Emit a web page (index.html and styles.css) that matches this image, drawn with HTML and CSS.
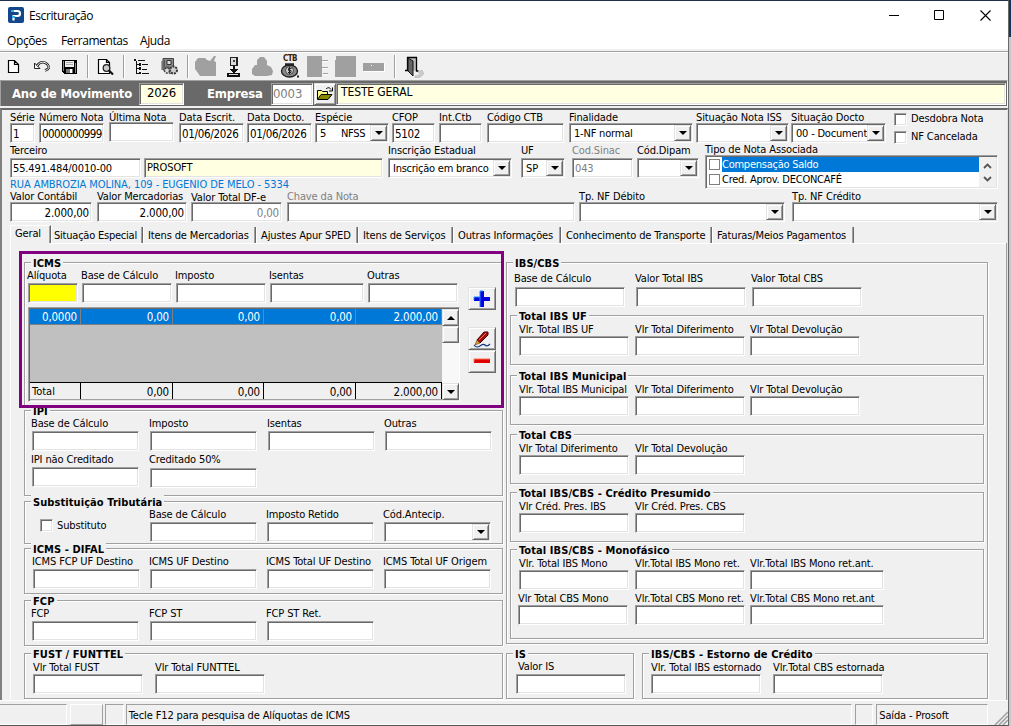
FILE: index.html
```html
<!DOCTYPE html>
<html lang="pt-BR">
<head>
    <meta charset="UTF-8">
    <meta name="viewport" content="width=device-width, initial-scale=1.0">
    <title>Escrituração</title>
    <link rel="stylesheet" href="styles.css">
</head>
<body>

<div class="desktop">
<div class="window">
    <!-- Title bar -->
    <div class="title-bar">
        <svg class="app-icon" width="16" height="16" viewBox="0 0 16 16"><rect width="16" height="16" rx="2" fill="#14468c"/><path d="M5.500 13.500V8M5 4h4.500a2.400 2.400 0 0 1 0 5H6" fill="none" stroke="#fff" stroke-width="2.200"/><path d="M3 3h3v2H3zM4 9h3v2H4z" fill="#2cb5e8"/></svg>
        <span class="title-text">Escrituração</span>
        <div class="window-buttons">
            <svg width="46" height="28" viewBox="0 0 46 28"><path d="M18 14.500h10" stroke="#000"/></svg>
            <svg width="46" height="28" viewBox="0 0 46 28"><path d="M17.500 9.500h9v9h-9z" fill="none" stroke="#000"/></svg>
            <svg width="46" height="28" viewBox="0 0 46 28"><path d="M17.500 9.500l10 10m0-10l-10 10" stroke="#000" stroke-width="1.100"/></svg>
        </div>
    </div>
    <div class="menu-bar">
        <span class="m-opcoes">Opções</span><span class="m-ferramentas">Ferramentas</span><span>Ajuda</span>
    </div>

    <!-- Toolbar -->
    <div class="toolbar">
        <div class="tool"><svg width="22" height="22" viewBox="0 0 22 22"><path d="M5.500 4.500h6l4 4v8h-10zM11.500 4.500v4h4" fill="#fff" stroke="#000" stroke-width="1.200"/></svg></div>
        <div class="tool"><svg width="22" height="22" viewBox="0 0 22 22"><path d="M3.500 7v5.500H9z" fill="#fff" stroke="#222"/><path d="M6 10C9 5 14 5.500 16.500 8.500S18 13 14 14.500" fill="none" stroke="#222" stroke-width="2.600"/><path d="M6 10C9 5 14 5.500 16.500 8.500S18 13 14 14.500" fill="none" stroke="#fff" stroke-width="1"/></svg></div>
        <div class="tool"><svg width="22" height="22" viewBox="0 0 22 22" shape-rendering="crispEdges"><path d="M3 4h15v14H5l-2-2z" fill="#000"/><path d="M6 5h9v6H6z" fill="#f0f0f0"/><path d="M4 5h1v10H4zM16 7h1v10h-1z" fill="#888"/><path d="M7 6h7v1H7zM7 8h7v1H7z" fill="#aaa"/><path d="M7 13h7v4H7z" fill="#777"/><path d="M11 13h2v4h-2z" fill="#fff"/></svg></div>
        <div class="tool-sep"></div>
        <div class="tool"><svg width="22" height="22" viewBox="0 0 22 22"><path d="M3.500 3.500h8l3 3v11h-11zM11.500 3.500v3h3" fill="#fff" stroke="#000" stroke-width="1.200"/><circle cx="11.500" cy="12" r="3.300" fill="#ccc" stroke="#222" stroke-width="1.300"/><path d="M14 14.500l4 4" stroke="#111" stroke-width="2.200"/></svg></div>
        <div class="tool-sep"></div>
        <div class="tool"><svg width="22" height="22" viewBox="0 0 22 22" shape-rendering="crispEdges"><path d="M3 3h2v2H3zM7 4h7v1H7zM5 5h1v13H5zM6 8h2v1H6zM8 7h2v3H8zM11 8h6v1h-6zM6 12h2v1H6zM8 11h2v3H8zM11 13h5v1h-5zM6 17h2v1H6zM8 16h2v2H8zM11 17h7v1h-7z" fill="#111"/></svg></div>
        <div class="tool"><svg width="22" height="22" viewBox="0 0 22 22"><path d="M4 2.500h10.500V14H4z" fill="#888" stroke="#444"/><path d="M8 4.500h4v4H8z" fill="#ddd" stroke="#333"/><path d="M3 5v9M5.500 4v8" stroke="#555"/><path d="M4 12l5-1 2 7" fill="none" stroke="#666" stroke-width="2"/><circle cx="14.500" cy="14" r="3.500" fill="#ccc" stroke="#333" stroke-width="2" stroke-dasharray="2 1"/><circle cx="8" cy="14.500" r="2.500" fill="#ddd" stroke="#444" stroke-width="1.500" stroke-dasharray="2 1"/></svg></div>
        <div class="tool-sep"></div>
        <div class="tool"><svg width="22" height="22" viewBox="0 0 22 22"><path d="M0 6l3-4h7l2 2 3 1 4-5h2l-2 5 2 1v14H5L3 17 0 13z" fill="#a0a0a0"/></svg></div>
        <div class="tool"><svg width="22" height="22" viewBox="0 0 22 22" shape-rendering="crispEdges"><path d="M7 1h8v9H7z" fill="#222"/><path d="M8 2h5v7H8z" fill="#ddd"/><path d="M10 4h2v2h-2z" fill="#444"/><path d="M10 10h2v3h4l-5 4-5-4h4zM4 17h13v4H4z" fill="#111"/><path d="M6 18h9v1H6z" fill="#ddd"/></svg></div>
        <div class="tool"><svg width="22" height="22" viewBox="0 0 22 22"><path d="M9 1h4l3 4v4l4 2 2 4-1 4-5 1H4l-3-2v-5l3-4h2V4z" fill="#a0a0a0"/></svg></div>
        <div class="tool"><svg width="22" height="22" viewBox="0 0 22 22"><ellipse cx="10.500" cy="15" rx="8" ry="6" fill="#888" stroke="#222" stroke-width="1.400"/><path d="M6 8.500h9" stroke="#222" stroke-width="2.500"/><circle cx="10.500" cy="14.500" r="4" fill="#ccc" stroke="#444"/><path d="M12.500 12.500h-3v2h2.500v2h-3M10.500 11v7" fill="none" stroke="#222"/><path d="M18 20.500h2" stroke="#222" stroke-width="2"/></svg><span class="ctb-text">CTB</span></div>
        <div class="tool"><svg width="22" height="22" viewBox="0 0 22 22" shape-rendering="crispEdges"><path d="M0 0h15v21H0zM15 4h6v1h-6zM15 11h6v1h-6zM16 17h5v1h-5z" fill="#a0a0a0"/><path d="M15 5h6v1h-6zM15 12h6v1h-6zM16 18h5v1h-5z" fill="#fff"/></svg></div>
        <div class="tool"><svg width="22" height="22" viewBox="0 0 22 22" shape-rendering="crispEdges"><path d="M1 0h20v21H0V4h1z" fill="#a0a0a0"/></svg></div>
        <div class="tool"><svg width="22" height="22" viewBox="0 0 22 22" shape-rendering="crispEdges"><path d="M0 7h21v8H0z" fill="#a0a0a0"/><path d="M8 9h1v1H8zM21 7h1v9H1v-1h20z" fill="#fff"/></svg></div>
        <div class="tool-sep last"></div>
        <div class="tool"><svg width="22" height="22" viewBox="0 0 22 22"><path d="M4.500 14V1.500h9V15h2M2 14.500h3" fill="#bbb" stroke="#000" stroke-width="1.300"/><path d="M5 2l5 3v15l-5-5z" fill="#666" stroke="#111"/><path d="M12 20c3 0 4-1 5-3l-2-1 4-2 2 4-1 0c-1 3-4 4-8 4z" fill="#ccc" stroke="#aaa" stroke-width=".5"/></svg></div>
    </div>

    <!-- Company strip -->
    <div class="company-bar">
        <span class="company-label lbl-ano">Ano de Movimento</span>
        <div class="sunken year-box">2026</div>
        <span class="company-label lbl-emp">Empresa</span>
        <div class="sunken code-box">0003</div>
        <div class="raised open-button"><svg width="18" height="16" viewBox="0 0 18 16"><path d="M1.500 13V4.500h4l1 1h5V8" fill="#ff8" stroke="#000"/><path d="M1.500 13.500L5 8.500h11l-4 5z" fill="#880" stroke="#000"/><path d="M10 3c2-2 4-1.500 5 .5M16.500 1.500V5H13" fill="none" stroke="#000"/></svg></div>
        <div class="sunken company-name">TESTE GERAL</div>
    </div>

    <div class="main-panel">
        <div class="row row-doc">
            <div class="field near f-serie"><label>Série</label><div class="sunken">1</div></div>
            <div class="field near f-numero"><label>Número Nota</label><div class="sunken">0000000999</div></div>
            <div class="field f-ultima"><label>Última Nota</label><div class="sunken"></div></div>
            <div class="field near f-escrit"><label>Data Escrit.</label><div class="sunken">01/06/2026</div></div>
            <div class="field near f-docto"><label>Data Docto.</label><div class="sunken">01/06/2026</div></div>
            <div class="field near f-especie"><label>Espécie</label><div class="sunken combo"><span class="especie-code">5</span><span>NFSS</span><i class="raised arrow"></i></div></div>
            <div class="field near f-cfop"><label>CFOP</label><div class="sunken">5102</div></div>
            <div class="field near f-int"><label>Int.Ctb</label><div class="sunken"></div></div>
            <div class="field near f-ctb"><label>Código CTB</label><div class="sunken"></div></div>
            <div class="field near f-final"><label>Finalidade</label><div class="sunken combo"><span>1-NF normal</span><i class="raised arrow"></i></div></div>
            <div class="field near f-iss"><label>Situação Nota ISS</label><div class="sunken combo"><i class="raised arrow"></i></div></div>
            <div class="field near f-sit"><label>Situação Docto</label><div class="sunken combo"><span>00 - Document</span><i class="raised arrow"></i></div></div>
            <div class="check-stack">
                <div class="check"><i class="sunken box"></i>Desdobra Nota</div>
                <div class="check"><i class="sunken box"></i>NF Cancelada</div>
            </div>
        </div>

        <div class="row row-party">
            <div class="field far f-terceiro"><label>Terceiro</label><div class="sunken">55.491.484/0010-00</div></div>
            <div class="field far f-nome"><label></label><div class="sunken cream">PROSOFT</div></div>
            <div class="field far f-inscr"><label>Inscrição Estadual</label><div class="sunken combo"><span>Inscrição em branco</span><i class="raised arrow"></i></div></div>
            <div class="field far f-uf"><label>UF</label><div class="sunken combo"><span>SP</span><i class="raised arrow"></i></div></div>
            <div class="field far f-sinac disabled"><label>Cod.Sinac</label><div class="sunken">043</div></div>
            <div class="field far f-dipam"><label>Cód.Dipam</label><div class="sunken combo"><i class="raised arrow"></i></div></div>
            <div class="field f-assoc"><label>Tipo de Nota Associada</label>
                <div class="sunken list">
                    <div class="list-items">
                        <div class="list-item"><i></i><span class="selected">Compensação Saldo</span></div>
                        <div class="list-item"><i></i><span>Cred. Aprov. DECONCAFÉ</span></div>
                    </div>
                    <svg class="list-scroll" width="17" height="30" viewBox="0 0 17 30"><path d="M5 11l3.500-3.500L12 11M5 20l3.500 3.500L12 20" fill="none" stroke="#555" stroke-width="1.800"/></svg>
                </div>
            </div>
        </div>
        <div class="address">RUA AMBROZIA MOLINA, 109 - EUGENIO DE MELO - 5334</div>

        <div class="row row-values">
            <div class="field near f-contabil"><label>Valor Contábil</label><div class="sunken num">2.000,00</div></div>
            <div class="field near f-merc"><label>Valor Mercadorias</label><div class="sunken num">2.000,00</div></div>
            <div class="field near f-dfe"><label>Valor Total DF-e</label><div class="sunken num">0,00</div></div>
            <div class="field near f-chave disabled"><label>Chave da Nota</label><div class="sunken"></div></div>
            <div class="field near f-debito"><label>Tp. NF Débito</label><div class="sunken combo"><i class="raised arrow"></i></div></div>
            <div class="field near f-credito"><label>Tp. NF Crédito</label><div class="sunken combo"><i class="raised arrow"></i></div></div>
        </div>

        <!-- Tabs -->
        <div class="tabs">
            <div class="tab active">Geral</div>
            <div class="tab t-sit">Situação Especial</div>
            <div class="tab t-merc">Itens de Mercadorias</div>
            <div class="tab t-sped">Ajustes Apur SPED</div>
            <div class="tab t-serv">Itens de Serviços</div>
            <div class="tab t-outras">Outras Informações</div>
            <div class="tab t-transp">Conhecimento de Transporte</div>
            <div class="tab t-fat">Faturas/Meios Pagamentos</div>
        </div>

        <div class="tab-page">
            <div class="left-column">
                <div class="group g-icms">
                    <h3>ICMS</h3>
                    <div class="icms-body">
                        <div>
                            <div class="row icms-fields">
                                <div class="field"><label>Alíquota</label><div class="sunken yellow"></div></div>
                                <div class="field"><label>Base de Cálculo</label><div class="sunken"></div></div>
                                <div class="field"><label>Imposto</label><div class="sunken"></div></div>
                                <div class="field"><label>Isentas</label><div class="sunken"></div></div>
                                <div class="field"><label>Outras</label><div class="sunken"></div></div>
                            </div>
                            <div class="sunken data-grid">
                                <div class="grid-area">
                                    <div class="grid-row grid-selected"><span>0,0000</span><span>0,00</span><span>0,00</span><span>0,00</span><span>2.000,00</span></div>
                                    <div class="grid-row grid-total"><span>Total</span><span>0,00</span><span>0,00</span><span>0,00</span><span>2.000,00</span></div>
                                </div>
                                <div class="scrollbar">
                                    <i class="raised arrow up"></i>
                                    <i class="raised thumb"></i>
                                    <i class="raised arrow down"></i>
                                </div>
                            </div>
                        </div>
                        <div class="grid-buttons">
                            <div class="raised b-add"><svg width="18" height="18" viewBox="0 0 18 18"><path d="M7 1h4v6h6v4h-6v6H7v-6H1V7h6z" fill="#0000e0"/><path d="M7 17V1h3M1 10V7h6" fill="none" stroke="#2090ff"/></svg></div>
                            <div class="raised b-edit"><svg width="18" height="18" viewBox="0 0 18 18"><path d="M4 10l7-8 4 0 0 3-8 8z" fill="#a01010" stroke="#400"/><path d="M6 10l7-7" stroke="#f64"/><path d="M4 10l3 3-5 2z" fill="#e0a030" stroke="#630" stroke-width=".6"/><path d="M1 15c2 3 4 2 6 1s3-3 5-1 4 0 5-1" fill="none" stroke="#103080" stroke-width="1.200"/></svg></div>
                            <div class="raised b-del"><svg width="18" height="18" viewBox="0 0 18 18"><path d="M1 6h16v4H1z" fill="#e00000"/><path d="M1 9V6h16" fill="none" stroke="#ff7050"/></svg></div>
                        </div>
                    </div>
                </div>

                <div class="group g-ipi">
                    <h3>IPI</h3>
                    <div class="row cols-107">
                        <div class="field"><label>Base de Cálculo</label><div class="sunken"></div></div>
                        <div class="field"><label>Imposto</label><div class="sunken"></div></div>
                        <div class="field"><label>Isentas</label><div class="sunken"></div></div>
                        <div class="field"><label>Outras</label><div class="sunken"></div></div>
                    </div>
                    <div class="row cols-107 second">
                        <div class="field"><label>IPI não Creditado</label><div class="sunken"></div></div>
                        <div class="field far"><label>Creditado 50%</label><div class="sunken"></div></div>
                    </div>
                </div>

                <div class="group g-subst">
                    <h3>Substituição Tributária</h3>
                    <div class="row cols-107">
                        <div class="check subst-check"><i class="sunken box"></i>Substituto</div>
                        <div class="field"><label>Base de Cálculo</label><div class="sunken"></div></div>
                        <div class="field"><label>Imposto Retido</label><div class="sunken"></div></div>
                        <div class="field"><label>Cód.Antecip.</label><div class="sunken combo"><i class="raised arrow"></i></div></div>
                    </div>
                </div>

                <div class="group g-difal">
                    <h3>ICMS - DIFAL</h3>
                    <div class="row cols-107">
                        <div class="field"><label>ICMS FCP UF Destino</label><div class="sunken"></div></div>
                        <div class="field"><label>ICMS UF Destino</label><div class="sunken"></div></div>
                        <div class="field"><label>ICMS Total UF Destino</label><div class="sunken"></div></div>
                        <div class="field"><label>ICMS Total UF Origem</label><div class="sunken"></div></div>
                    </div>
                </div>

                <div class="group g-fcp">
                    <h3>FCP</h3>
                    <div class="row cols-107">
                        <div class="field"><label>FCP</label><div class="sunken"></div></div>
                        <div class="field"><label>FCP ST</label><div class="sunken"></div></div>
                        <div class="field"><label>FCP ST Ret.</label><div class="sunken"></div></div>
                    </div>
                </div>

                <div class="group g-fust">
                    <h3>FUST / FUNTTEL</h3>
                    <div class="row cols-fust">
                        <div class="field near"><label>Vlr Total FUST</label><div class="sunken"></div></div>
                        <div class="field near"><label>Vlr Total FUNTTEL</label><div class="sunken"></div></div>
                    </div>
                </div>
                <div class="highlight"></div>
            </div>

            <div class="right-column">
                <div class="group g-ibs">
                    <h3>IBS/CBS</h3>
                    <div class="row cols-ibs">
                        <div class="field far"><label>Base de Cálculo</label><div class="sunken"></div></div>
                        <div class="field far"><label>Valor Total IBS</label><div class="sunken"></div></div>
                        <div class="field far"><label>Valor Total CBS</label><div class="sunken"></div></div>
                    </div>

                    <div class="group inner">
                        <h3>Total IBS UF</h3>
                        <div class="row cols-110">
                            <div class="field near"><label>Vlr. Total IBS UF</label><div class="sunken"></div></div>
                            <div class="field near"><label>Vlr Total Diferimento</label><div class="sunken"></div></div>
                            <div class="field near"><label>Vlr Total Devolução</label><div class="sunken"></div></div>
                        </div>
                    </div>
                    <div class="group inner i-mun">
                        <h3>Total IBS Municipal</h3>
                        <div class="row cols-110">
                            <div class="field near"><label>Vlr. Total IBS Municipal</label><div class="sunken"></div></div>
                            <div class="field near"><label>Vlr Total Diferimento</label><div class="sunken"></div></div>
                            <div class="field near"><label>Vlr Total Devolução</label><div class="sunken"></div></div>
                        </div>
                    </div>
                    <div class="group inner i-cbs">
                        <h3>Total CBS</h3>
                        <div class="row cols-110">
                            <div class="field near"><label>Vlr Total Diferimento</label><div class="sunken"></div></div>
                            <div class="field near"><label>Vlr Total Devolução</label><div class="sunken"></div></div>
                        </div>
                    </div>
                    <div class="group inner i-cred">
                        <h3>Total IBS/CBS - Crédito Presumido</h3>
                        <div class="row cols-110">
                            <div class="field near"><label>Vlr Créd. Pres. IBS</label><div class="sunken"></div></div>
                            <div class="field near"><label>Vlr Créd. Pres. CBS</label><div class="sunken"></div></div>
                        </div>
                    </div>
                    <div class="group inner i-mono">
                        <h3>Total IBS/CBS - Monofásico</h3>
                        <div class="row cols-110">
                            <div class="field near"><label>Vlr. Total IBS Mono</label><div class="sunken"></div></div>
                            <div class="field near"><label>Vlr.Total IBS Mono ret.</label><div class="sunken"></div></div>
                            <div class="field near"><label>Vlr.Total IBS Mono ret.ant.</label><div class="sunken"></div></div>
                        </div>
                        <div class="row cols-110 second">
                            <div class="field near"><label>Vlr Total CBS Mono</label><div class="sunken"></div></div>
                            <div class="field near"><label>Vlr.Total CBS Mono ret.</label><div class="sunken"></div></div>
                            <div class="field near"><label>Vlr.Total CBS Mono ret.ant</label><div class="sunken"></div></div>
                        </div>
                    </div>
                </div>

                <div class="bottom-groups">
                    <div class="group g-is">
                        <h3>IS</h3>
                        <div class="field"><label>Valor IS</label><div class="sunken"></div></div>
                    </div>
                    <div class="group g-estorno">
                        <h3>IBS/CBS - Estorno de Crédito</h3>
                        <div class="row cols-fust">
                            <div class="field near"><label>Vlr. Total IBS estornado</label><div class="sunken"></div></div>
                            <div class="field near"><label>Vlr.Total CBS estornada</label><div class="sunken"></div></div>
                        </div>
                    </div>
                </div>
            </div>
        </div>
    </div>

    <!-- Status bar -->
    <div class="status-bar">
        <div class="status s-one"></div>
        <div class="status s-two"></div>
        <div class="status s-three"></div>
        <div class="status s-hint">Tecle F12 para pesquisa de Alíquotas de ICMS</div>
        <div class="status s-five"></div>
        <div class="status s-user">Saída - Prosoft</div>
        <svg class="grip" width="14" height="14" viewBox="0 0 14 14"><path d="M1 14L14 1M5 14l9-9M9 14l5-5" stroke="#a0a0a0" stroke-width="1.500"/></svg>
    </div>
</div>
<div class="behind"><div class="behind-top"></div></div>
</div>

</body>
</html>
```

FILE: styles.css
```css
* {
    box-sizing: border-box;
}

body {
    margin: 0;
    background: #c8c8c8;
    font-family: "DejaVu Sans Condensed", "DejaVu Sans", sans-serif;
    font-stretch: condensed;
    font-size: 11px;
    line-height: 14px;
    letter-spacing: -0.13px;
    color: #000;
    overflow: hidden;
}

.desktop {
    display: flex;
    width: 1011px;
    height: 726px;
}

.window {
    width: 1009px;
    height: 726px;
    background: #f0f0f0;
    border-top: 1px solid #1f3048;
    border-right: 1px solid #696969;
    border-bottom: 1px solid #555;
    display: flex;
    flex-direction: column;
}

.behind {
    width: 2px;
    background: #c8c8c8;
}

.behind-top {
    height: 37px;
    background: #17365a;
}

/* 3D edges */
.sunken {
    background: #fff;
    border: 1px solid;
    border-color: #a0a0a0 #fff #fff #a0a0a0;
    box-shadow: inset 1px 1px 0 #696969, inset -1px -1px 0 #e3e3e3;
}

.raised {
    background: #f0f0f0;
    border: 1px solid;
    border-color: #e3e3e3 #696969 #696969 #e3e3e3;
    box-shadow: inset 1px 1px 0 #fff, inset -1px -1px 0 #a0a0a0;
}

/* Title and menu */
.title-bar,
.menu-bar {
    display: flex;
    align-items: center;
    background: #fff;
    font-family: "Open Sans", "Noto Sans", sans-serif;
    font-stretch: normal;
    font-size: 12px;
    letter-spacing: -0.4px;
}

.title-bar {
    height: 28px;
    padding-left: 8px;
}

.title-text {
    margin-left: 5px;
    padding-top: 2px;
}

.window-buttons {
    display: flex;
    margin: 0 -1px 0 auto;
}

.menu-bar {
    height: 20px;
    padding: 4px 0 0 7px;
}

.m-opcoes {
    width: 54px;
}

.m-ferramentas {
    width: 79px;
}

/* Toolbar */
.toolbar {
    display: flex;
    align-items: center;
    height: 31px;
    padding-top: 2px;
    background: linear-gradient(#f0f0f0 2px, #a0a0a0 2px, #a0a0a0 3px, #fff 3px, #fff 4px, #f0f0f0 4px);
    border-bottom: 1px solid #f0f0f0;
}

.tool {
    position: relative;
    display: flex;
    justify-content: center;
    align-items: center;
    width: 28px;
    height: 24px;
    padding-top: 4px;
}

.ctb-text {
    position: absolute;
    top: 2px;
    left: 5px;
    width: 18px;
    font-size: 8px;
    line-height: 8px;
    font-weight: bold;
    text-align: center;
    color: #402000;
    letter-spacing: -0.5px;
}

.tool-sep {
    width: 8px;
    height: 23px;
    margin-top: 2px;
    background: linear-gradient(90deg, transparent 3px, #a0a0a0 3px, #a0a0a0 4px, #fff 4px, #fff 5px, transparent 5px);
}

.tool-sep.last {
    width: 12px;
    background-position: 3px 0;
    background-repeat: no-repeat;
}

/* Company strip */
.company-bar {
    display: flex;
    height: 26px;
    padding: 2px 1px 0 1px;
    background: #696969;
    border-top: 1px solid #a0a0a0;
    border-left: 1px solid #a0a0a0;
    border-right: 1px solid #fff;
}

.company-label {
    flex: none;
    color: #fff;
    font-size: 13px;
    font-weight: bold;
    line-height: 22px;
    letter-spacing: -0.2px;
    white-space: nowrap;
}

.lbl-ano {
    width: 137px;
    padding-left: 10px;
}

.lbl-emp {
    width: 87px;
    padding-left: 23px;
}

.company-bar .sunken,
.company-bar .raised {
    height: 22px;
}

.year-box {
    width: 45px;
    background: #ffffe1;
    font-size: 13px;
    line-height: 17px;
    text-align: center;
}

.code-box {
    width: 42px;
    padding-left: 1px;
    color: #808080;
    font-size: 13px;
    line-height: 19px;
}

.open-button {
    display: flex;
    align-items: center;
    justify-content: center;
    width: 22px;
    margin-left: 1px;
}

.company-name {
    flex: 1;
    padding-left: 4px;
    background: #ffffe1;
    font-size: 12px;
    line-height: 17px;
}

/* Main panel */
.main-panel {
    height: 592px;
    margin-top: 2px;
    padding: 0 0 0 8px;
    border-top: 2px solid #696969;
    border-left: 2px solid #808080;
    border-right: 1px solid #e3e3e3;
}

.row {
    display: flex;
}

.field {
    flex: none;
}

.field label {
    display: block;
    height: 14px;
    margin-bottom: 1px;
    line-height: 16px;
    white-space: nowrap;
}

.field.near > label {
    margin-bottom: 0;
}

.field.far > label {
    margin-bottom: 2px;
}

.field > .sunken {
    height: 20px;
    padding: 0 2px;
    line-height: 20px;
    white-space: nowrap;
}

.disabled {
    color: #808080;
}

.field > .num {
    text-align: right;
    font-size: 11.5px;
    letter-spacing: -0.2px;
}

.field > .combo {
    display: flex;
    padding: 1px 1px 1px 4px;
    line-height: 18px;
}

.combo .arrow {
    flex: none;
    margin-left: auto;
}

.arrow {
    display: flex;
    align-items: center;
    justify-content: center;
    width: 17px;
}

.arrow::after {
    content: "";
    border: 4px solid transparent;
    border-top-color: #000;
    border-bottom-width: 0;
}

.arrow.up::after {
    border-top: 0;
    border-bottom: 4px solid #000;
}

.field > .cream {
    background: #ffffe1;
    line-height: 18px;
}

.field > .yellow {
    background: #ff0;
}

.check {
    display: flex;
    align-items: center;
    line-height: 16px;
}

.box {
    width: 13px;
    height: 13px;
    margin-right: 4px;
}

/* Document row */
.row-doc {
    height: 33px;
    margin-top: -1px;
}

.row-doc label {
    line-height: 17px;
}

.row-party label {
    line-height: 18px;
}

.row-doc .field > .sunken {
    font-size: 11.5px;
    letter-spacing: -0.3px;
}

.f-serie { width: 25px; margin-right: 4px; }
.f-numero { width: 65px; margin-right: 5px; }
.row-doc .f-numero > .sunken { letter-spacing: -0.6px; }
.f-ultima { width: 65px; margin-right: 5px; }
.f-ultima > label { margin-bottom: -1px !important; }
.f-escrit { width: 65px; margin-right: 3px; }
.f-docto { width: 65px; margin-right: 3px; }
.f-especie { width: 74px; margin-right: 3px; }
.row-doc .f-especie > .sunken { font-size: 11px; }
.especie-code { width: 21px; }
.f-cfop { width: 43px; margin-right: 4px; }
.f-int { width: 43px; margin-right: 5px; }
.f-ctb { width: 77px; margin-right: 5px; }
.f-final { width: 124px; margin-right: 3px; }
.f-iss { width: 93px; margin-right: 2px; }
.f-sit { width: 95px; margin-right: 8px; }
.row-doc .f-final > .sunken { font-size: 11px; letter-spacing: -0.2px; }
.row-doc .f-sit > .sunken { font-size: 11px; letter-spacing: -0.2px; }

.check-stack {
    padding-top: 3px;
}

.check-stack .check {
    height: 18px;
    padding-bottom: 4px;
}

/* Third-party row */
.row-party {
    height: 34px;
}

.f-terceiro { width: 131px; margin-right: 3px; }
.f-nome { width: 239px; margin-right: 5px; }
.f-inscr { width: 124px; margin-right: 9px; }
.f-inscr > .sunken { letter-spacing: -0.25px; }
.f-uf { width: 44px; margin-right: 7px; }
.f-sinac { width: 61px; margin-right: 4px; }
.f-dipam { width: 62px; margin-right: 6px; }
.f-assoc { width: 293px; }

.f-assoc > label {
    margin: -1px 0 0;
}

.f-assoc > .list {
    display: flex;
    height: 34px;
    padding: 1px;
    background: #f0f0f0;
}

.list-items {
    flex: 1;
    background: #fff;
}

.list-item {
    display: flex;
    height: 15px;
    line-height: 16px;
}

.list-item i {
    width: 11px;
    height: 11px;
    margin: 2px 2px 0 2px;
    border: 1px solid #808080;
}

.list-item span {
    flex: 1;
    letter-spacing: -0.25px;
}

.list-item .selected {
    background: #0078d7;
    color: #fff;
}

.address {
    width: 400px;
    margin-top: 2px;
    color: #0078d7;
    letter-spacing: -0.08px;
    white-space: nowrap;
}

/* Values row */
.row-values {
    height: 35px;
    margin-top: -4px;
}

.row-values label {
    line-height: 17px;
}

.f-contabil { width: 82px; margin-right: 5px; }
.f-merc { width: 90px; margin-right: 4px; }
.f-dfe { width: 91px; margin-right: 5px; }
.f-dfe > .sunken { color: #808080; }
.row-values .f-dfe > label { line-height: 19px; }
.f-chave { width: 288px; margin-right: 4px; }
.f-debito { width: 206px; margin-right: 7px; }
.f-credito { width: 206px; }

/* Tabs */
.tabs {
    display: flex;
    align-items: flex-end;
    height: 20px;
}

.tab {
    height: 16px;
    padding-left: 4px;
    line-height: 17px;
    white-space: nowrap;
    border-right: 1px solid #696969;
    border-left: 1px solid #fff;
    box-shadow: inset -1px 0 0 #a0a0a0;
}

.tab.active {
    width: 41px;
    height: 18px;
    border-top: 1px solid #fff;
    line-height: 15px;
}

.t-sit { width: 92px; padding-left: 2px; letter-spacing: -0.22px; }
.t-merc { width: 113px; }
.t-sped { width: 102px; }
.t-serv { width: 95px; }
.t-outras { width: 108px; }
.t-transp { width: 151px; }
.t-fat { width: 142px; }

.tab-page {
    display: flex;
    height: 457px;
    padding-left: 13px;
    border-left: 1px solid #fff;
    border-right: 1px solid #a0a0a0;
    background: linear-gradient(#fff, #fff) 39px 0 / 100% 1px no-repeat;
}

/* Group boxes */
.group {
    border: 1px solid #a0a0a0;
    box-shadow: 1px 1px 0 #fff, inset 1px 1px 0 #fff;
}

.group h3 {
    width: fit-content;
    height: 14px;
    margin: -7px 0 -7px 6px;
    padding: 0 2px;
    background: #f0f0f0;
    font-size: 11px;
    font-weight: bold;
    line-height: 16px;
    letter-spacing: 0.08px;
    white-space: nowrap;
}

.group .row,
.icms-body {
    padding-top: 5px;
}

.left-column {
    position: relative;
    width: 479px;
    margin-right: 3px;
    padding-top: 19px;
}

/* Purple frame over the ICMS box */
.highlight {
    position: absolute;
    left: -5px;
    top: 8px;
    width: 485px;
    height: 157px;
    border: 3px solid #800080;
}

.g-icms {
    height: 144px;
    margin-bottom: 4px;
    border-bottom: none;
    box-shadow: inset 1px 1px 0 #fff;
}

.icms-body {
    display: flex;
    padding-left: 3px;
}

.icms-fields.row {
    padding: 0;
    gap: 4px;
}

.icms-fields .field { width: 90px; }
.icms-fields .field:first-child { width: 50px; }
.icms-fields .field:nth-child(4) { width: 94px; }

.icms-fields label {
    margin-left: -1px;
}

.data-grid {
    display: flex;
    width: 432px;
    height: 95px;
    margin-top: 4px;
    padding: 1px;
}

.grid-area {
    display: flex;
    flex-direction: column;
    justify-content: space-between;
    width: 412px;
    background: #c0c0c0;
}

.grid-row {
    display: grid;
    grid-template-columns: 51px 92px 91px 92px 86px;
    height: 16px;
    font-size: 11.5px;
    letter-spacing: -0.2px;
    text-align: right;
    line-height: 16px;
}

.grid-row span {
    padding-right: 3px;
    border-right: 1px solid #808080;
}

.grid-selected {
    background: #0078d7;
    color: #fff;
    border-bottom: 1px solid #808080;
}

.grid-selected span {
    height: 15px;
}

.grid-total {
    height: 18px;
    background: #f0f0f0;
    border-top: 1px solid #000;
    border-bottom: 1px solid #a0a0a0;
    line-height: 18px;
}

.grid-total span {
    height: 16px;
    border-color: #000;
}

.grid-total span:first-child {
    padding-left: 2px;
    font-size: 11px;
    letter-spacing: 0;
    text-align: left;
}

.scrollbar {
    display: flex;
    flex-direction: column;
    width: 17px;
    background: #f8f8f8;
}

.scrollbar i {
    width: 17px;
    height: 17px;
}

.scrollbar .down {
    margin-top: auto;
}

.grid-buttons {
    width: 28px;
    margin-left: 8px;
    padding-top: 19px;
}

.grid-buttons div {
    display: flex;
    align-items: center;
    justify-content: center;
    width: 28px;
    height: 23px;
}

.grid-buttons .b-edit {
    margin-top: 17px;
}

.cols-107 .field {
    width: 107px;
    margin-right: 10px;
}

.group .second {
    padding-top: 1px;
}

.g-ipi {
    height: 86px;
    margin-bottom: 5px;
}

.g-ipi .row {
    padding-left: 7px;
}

.g-ipi .field {
    margin-right: 11px;
}

.g-ipi .field:nth-child(3) {
    margin-right: 10px;
}

.g-ipi label {
    margin-left: -1px;
}

.g-subst {
    height: 43px;
    margin-bottom: 4px;
}

.g-subst label {
    margin-left: -1px;
}

.subst-check {
    width: 110px;
    height: 13px;
    margin: 12px 0 0 15px;
}

.g-difal {
    height: 46px;
    margin-bottom: 6px;
}

.g-difal .row {
    padding-left: 8px;
}

.g-difal label {
    margin-left: -1px;
}

.g-fcp {
    height: 46px;
    margin-bottom: 7px;
}

.g-fcp .row {
    padding-left: 7px;
}

.g-fcp .field:first-child {
    margin-right: 11px;
}

.g-fcp label {
    margin-left: -1px;
}

.g-fust {
    height: 46px;
}

.group .cols-fust {
    padding: 6px 0 0 8px;
}

.cols-fust .field {
    width: 110px;
    margin-right: 12px;
}

/* Right side */
.right-column {
    width: 482px;
    padding-top: 19px;
}

.g-ibs {
    height: 382px;
    margin-bottom: 9px;
}

.group .cols-ibs {
    padding: 8px 0 0 8px;
}

.cols-ibs .field {
    width: 110px;
    margin-right: 11px;
}

.cols-ibs .field:nth-child(2) {
    margin-right: 6px;
}

.cols-ibs label {
    margin-left: -1px;
}

.inner {
    width: 474px;
    height: 50px;
    margin: 8px 0 0 3px;
}

.i-mun { margin-top: 10px; }
.i-cbs { margin-top: 9px; }
.i-cred { margin-top: 8px; }
.i-mono { height: 90px; margin-top: 7px; }

.group .cols-110 {
    padding: 6px 0 0 8px;
}

.cols-110 .field {
    width: 110px;
    margin-right: 6px;
}

.cols-110 .field:nth-child(2) {
    margin-right: 5px;
}

.i-mono .field:nth-child(3) {
    width: 134px;
}

.i-mono .second {
    padding: 1px 0 0 7px;
}

.i-mono .second .field:first-child {
    margin-right: 7px;
}

.bottom-groups {
    display: flex;
    gap: 8px;
}

.g-is {
    width: 128px;
    height: 46px;
}

.g-is .field {
    width: 110px;
    margin: 5px 0 0 9px;
}

.g-is label {
    padding-left: 2px;
}

.g-estorno {
    width: 346px;
    height: 46px;
}

/* Status bar */
.status-bar {
    display: flex;
    flex: 1;
    padding-top: 3px;
    border-top: 1px solid #fff;
}

.status {
    height: 21px;
    margin-right: 3px;
    padding-left: 2px;
    line-height: 21px;
    border: 1px solid;
    border-color: #a0a0a0 #fff #fff #a0a0a0;
    white-space: nowrap;
}

.s-one { width: 67px; border-left: none; }
.s-two { width: 33px; margin-right: 2px; border-color: #fff #a0a0a0 #a0a0a0 #fff; }
.s-three { width: 19px; margin-right: 2px; }
.s-hint { width: 728px; }
.s-five { width: 18px; }
.s-user { width: 112px; }

.grip {
    margin: 7px 0 0 3px;
}
```
